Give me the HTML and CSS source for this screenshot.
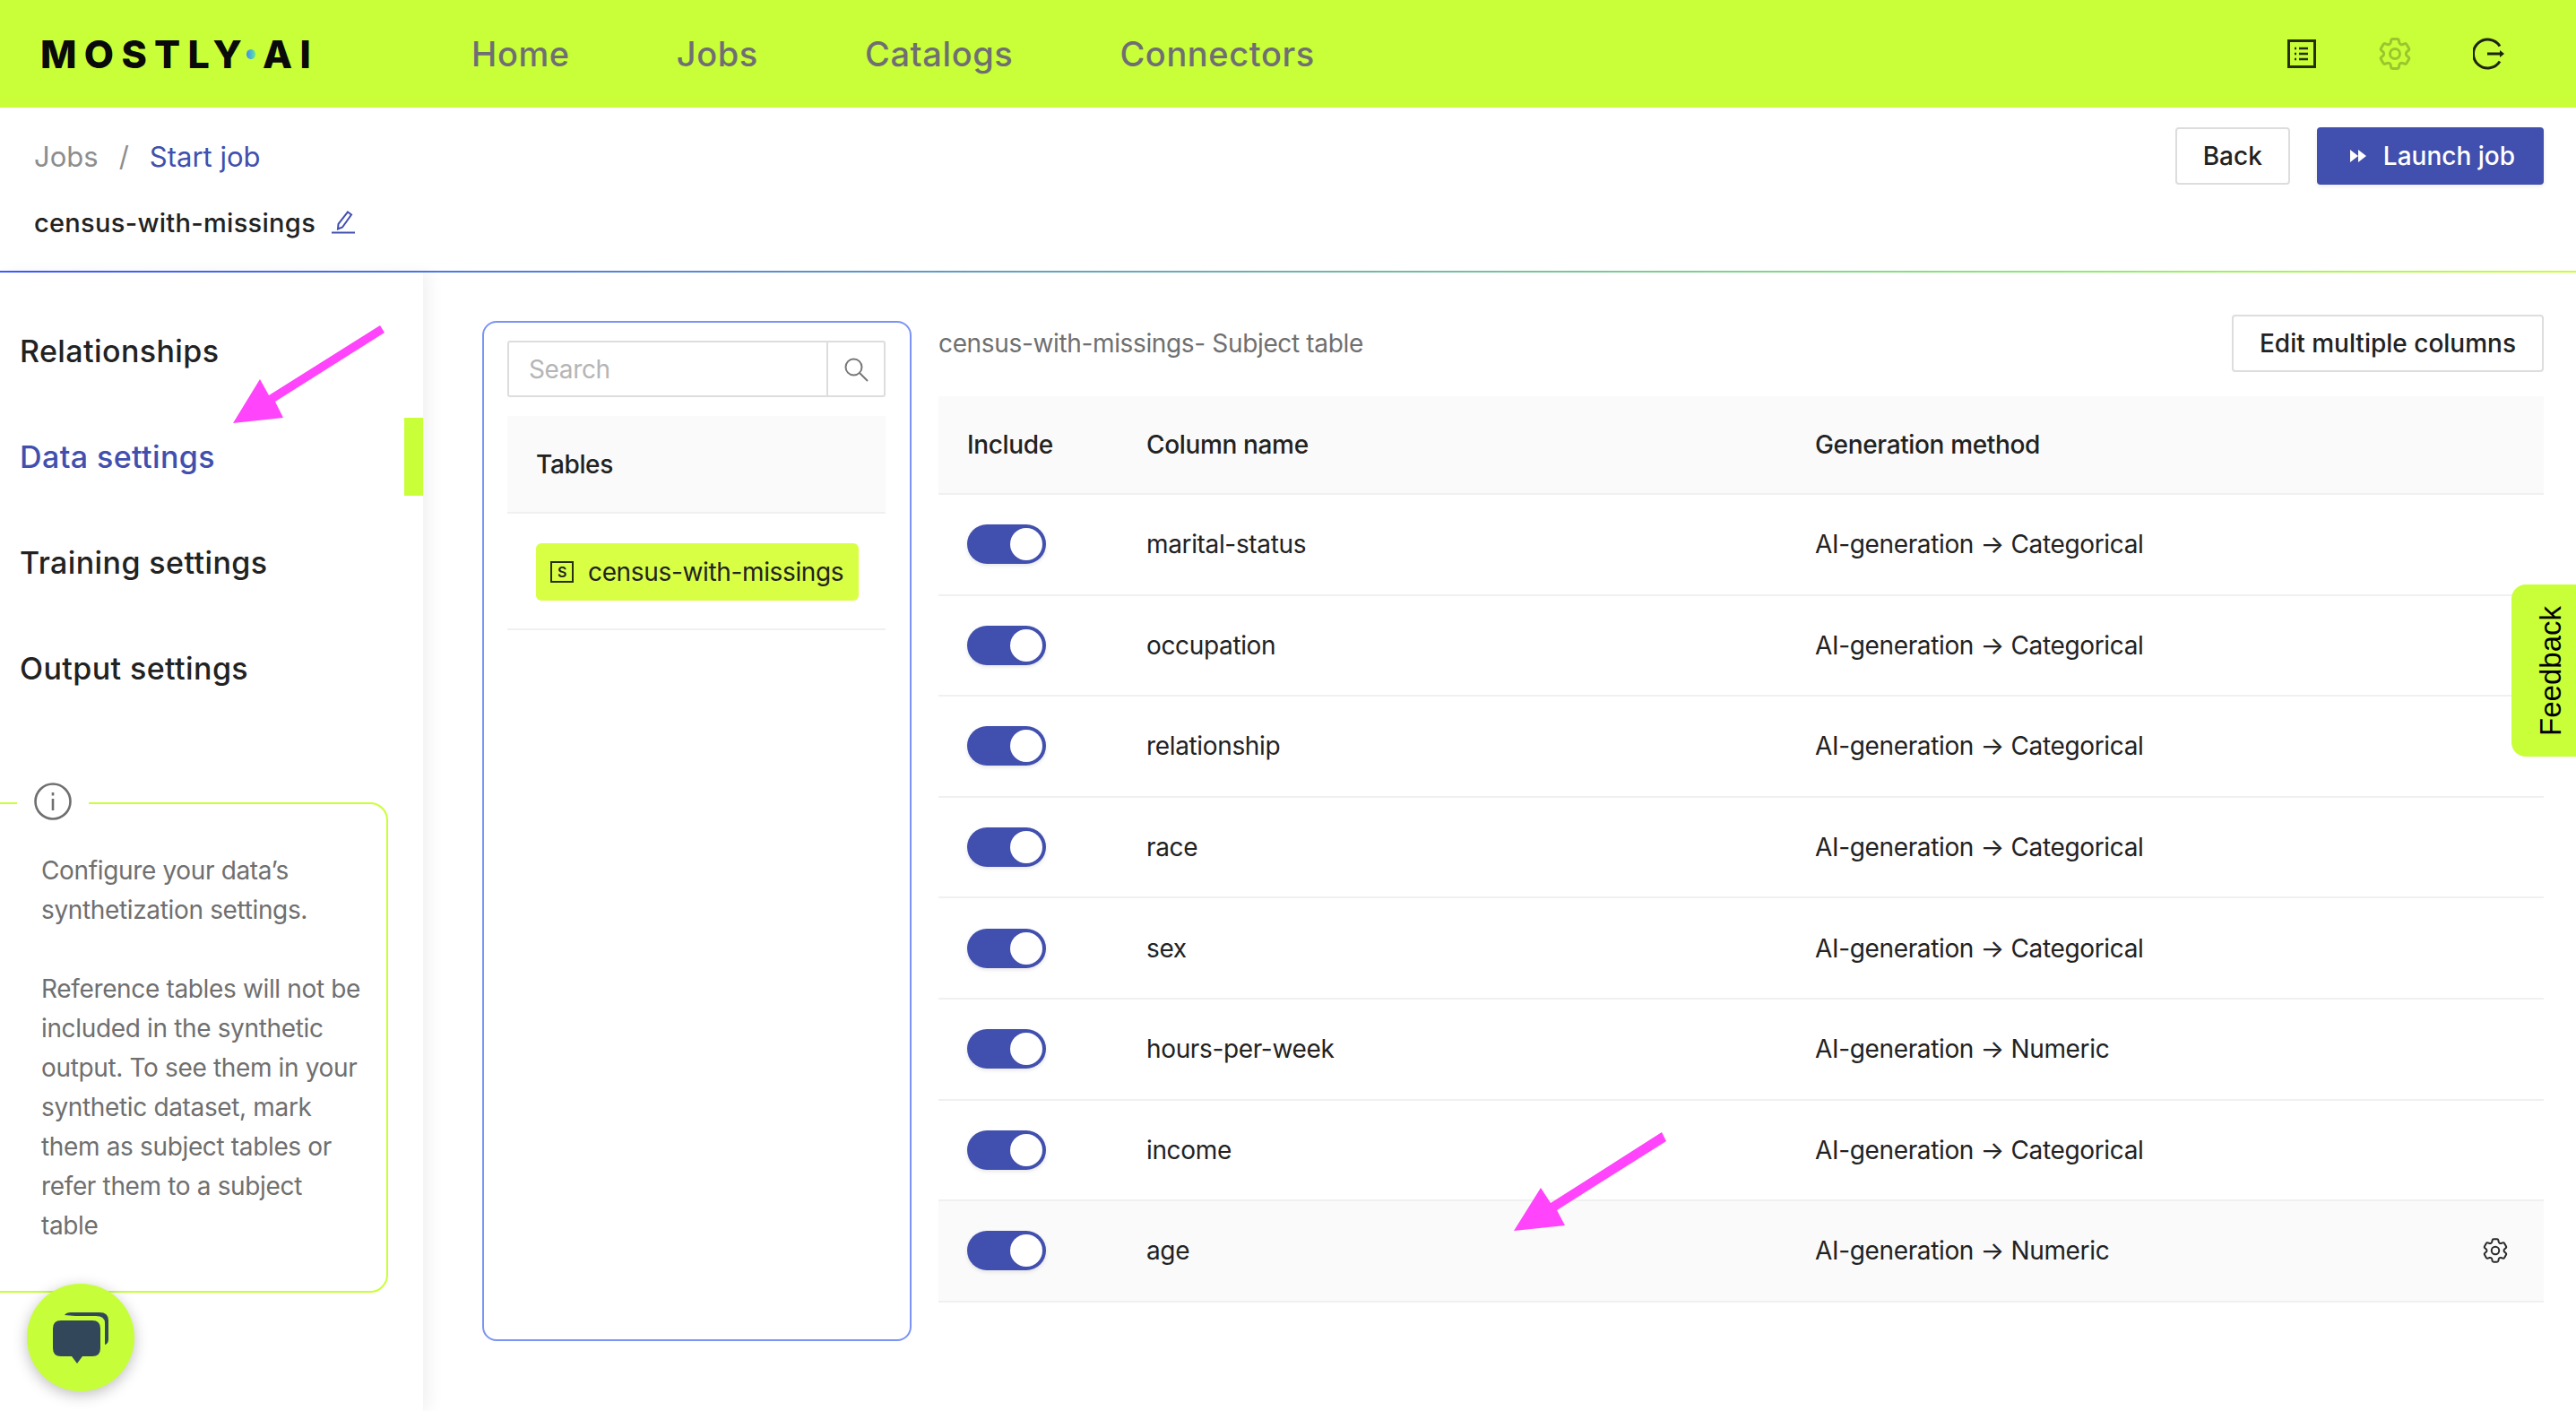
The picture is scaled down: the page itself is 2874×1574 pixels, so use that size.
FILE: index.html
```html
<!DOCTYPE html>
<html lang="en">
<head>
  <meta charset="UTF-8">
  <title>Start job</title>
  <link rel="stylesheet" href="styles.css">
</head>
<body>
  <header class="topbar">
    <div class="logo">MOSTLY<span class="logo-dot"></span>AI</div>
    <nav class="mainnav">
      <a>Home</a>
      <a>Jobs</a>
      <a>Catalogs</a>
      <a>Connectors</a>
    </nav>
    <div class="topicons">
      <svg class="icon-list" viewBox="0 0 32 32" fill="none" stroke="#26300f">
        <rect x="1.5" y="1.5" width="29" height="29" stroke-width="3"/>
        <path d="M13 10h10M13 16h10M13 22h10" stroke-width="2.6"/>
        <path d="M8 10h2M8 16h2M8 22h2" stroke-width="2.6" stroke-dasharray="2 0"/>
      </svg>
      <svg class="icon-gear" viewBox="0 0 24 24" fill="none" stroke="#9bc52f" stroke-width="1.6">
        <path d="M9.594 3.94c.09-.542.56-.94 1.11-.94h2.593c.55 0 1.02.398 1.11.94l.213 1.281c.063.374.313.686.645.87.074.04.147.083.22.127.324.196.72.257 1.075.124l1.217-.456a1.125 1.125 0 011.37.49l1.296 2.247a1.125 1.125 0 01-.26 1.431l-1.003.827c-.293.24-.438.613-.431.992a6.759 6.759 0 010 .255c-.007.378.138.75.43.99l1.005.828c.424.35.534.954.26 1.43l-1.298 2.247a1.125 1.125 0 01-1.369.491l-1.217-.456c-.355-.133-.75-.072-1.076.124a6.57 6.57 0 01-.22.128c-.331.183-.581.495-.644.869l-.213 1.28c-.09.543-.56.941-1.11.941h-2.594c-.55 0-1.02-.398-1.11-.94l-.213-1.281c-.062-.374-.312-.686-.644-.87a6.52 6.52 0 01-.22-.127c-.325-.196-.72-.257-1.076-.124l-1.217.456a1.125 1.125 0 01-1.369-.49l-1.297-2.247a1.125 1.125 0 01.26-1.431l1.004-.827c.292-.24.437-.613.43-.992a6.932 6.932 0 010-.255c.007-.378-.138-.75-.43-.99l-1.004-.828a1.125 1.125 0 01-.26-1.43l1.297-2.247a1.125 1.125 0 011.37-.491l1.216.456c.356.133.751.072 1.076-.124.072-.044.146-.087.22-.128.332-.183.582-.495.644-.869l.214-1.281z"/>
        <circle cx="12" cy="12" r="3"/>
      </svg>
      <svg class="icon-exit" viewBox="0 0 36 36" fill="none" stroke="#1c2410" stroke-width="3">
        <path d="M30 9.5A16 16 0 1 0 30 26.5"/>
        <path d="M16 18h17"/>
        <path d="M30 14l5 4-5 4z" fill="#1c2410" stroke="none"/>
      </svg>
    </div>
  </header>

  <section class="subbar">
    <div class="subbar-left">
      <div class="breadcrumb">
        <span class="crumb-muted">Jobs</span>
        <span class="crumb-sep">/</span>
        <span class="crumb-current">Start job</span>
      </div>
      <div class="jobname">
        census-with-missings
        <svg class="icon-pencil" viewBox="0 0 26 26" fill="none" stroke="#414fae" stroke-width="2">
          <path d="M18 1.500l4 3-10 14-5 2 .5-5.500z"/>
          <path d="M0 24.500h26"/>
        </svg>
      </div>
    </div>
    <div class="subbar-actions">
      <button class="btn">Back</button>
      <button class="btn btn-primary">
        <svg class="icon-ff" viewBox="0 0 18 14" fill="#fff"><path d="M0 0l9 7-9 7zM9 0l9 7-9 7z"/></svg>
        Launch job
      </button>
    </div>
  </section>

  <main class="layout">
    <aside class="sidebar">
      <nav class="sidenav">
        <a class="sidenav-item">Relationships</a>
        <a class="sidenav-item active">Data settings</a>
        <a class="sidenav-item">Training settings</a>
        <a class="sidenav-item">Output settings</a>
      </nav>
      <div class="infobox">
        <span class="infobox-icon">
          <svg viewBox="0 0 42 42" fill="none" stroke="#6f6f6f" stroke-width="2.600">
            <circle cx="21" cy="21" r="19.500"/>
            <path d="M21 18v13"/>
            <path d="M21 11v3.500"/>
          </svg>
        </span>
        <p>Configure your data’s synthetization settings.</p>
        <p>Reference tables will not be included in the synthetic output. To see them in your synthetic dataset, mark them as subject tables or refer them to a subject table</p>
      </div>
    </aside>

    <div class="content">
      <section class="tables-panel">
        <div class="searchbox">
          <span class="searchbox-input">Search</span>
          <span class="searchbox-btn">
            <svg viewBox="0 0 28 28" fill="none" stroke="#777" stroke-width="2">
              <circle cx="11.500" cy="11.500" r="9"/>
              <path d="M18 18l9 9"/>
            </svg>
          </span>
        </div>
        <div class="tables-head">Tables</div>
        <div class="tables-row">
          <div class="chip">
            <span class="chip-badge">S</span>
            census-with-missings
          </div>
        </div>
      </section>

      <section class="columns">
        <div class="columns-head">
          <span class="columns-title">census-with-missings- Subject table</span>
          <button class="btn">Edit multiple columns</button>
        </div>
        <div class="table">
          <div class="row row-head">
            <span>Include</span>
            <span>Column name</span>
            <span>Generation method</span>
          </div>
          <div class="row"><span class="toggle"></span><span>marital-status</span><span>AI-generation → Categorical</span></div>
          <div class="row"><span class="toggle"></span><span>occupation</span><span>AI-generation → Categorical</span></div>
          <div class="row"><span class="toggle"></span><span>relationship</span><span>AI-generation → Categorical</span></div>
          <div class="row"><span class="toggle"></span><span>race</span><span>AI-generation → Categorical</span></div>
          <div class="row"><span class="toggle"></span><span>sex</span><span>AI-generation → Categorical</span></div>
          <div class="row"><span class="toggle"></span><span>hours-per-week</span><span>AI-generation → Numeric</span></div>
          <div class="row"><span class="toggle"></span><span>income</span><span>AI-generation → Categorical</span></div>
          <div class="row row-hover">
            <span class="toggle"></span><span>age</span><span>AI-generation → Numeric</span>
            <svg class="icon-rowgear" viewBox="0 0 24 24" fill="none" stroke="#2a2a2a" stroke-width="1.400">
              <path d="M9.594 3.94c.09-.542.56-.94 1.11-.94h2.593c.55 0 1.02.398 1.11.94l.213 1.281c.063.374.313.686.645.87.074.04.147.083.22.127.324.196.72.257 1.075.124l1.217-.456a1.125 1.125 0 011.37.49l1.296 2.247a1.125 1.125 0 01-.26 1.431l-1.003.827c-.293.24-.438.613-.431.992a6.759 6.759 0 010 .255c-.007.378.138.75.43.99l1.005.828c.424.35.534.954.26 1.43l-1.298 2.247a1.125 1.125 0 01-1.369.491l-1.217-.456c-.355-.133-.75-.072-1.076.124a6.57 6.57 0 01-.22.128c-.331.183-.581.495-.644.869l-.213 1.28c-.09.543-.56.941-1.11.941h-2.594c-.55 0-1.02-.398-1.11-.94l-.213-1.281c-.062-.374-.312-.686-.644-.87a6.52 6.52 0 01-.22-.127c-.325-.196-.72-.257-1.076-.124l-1.217.456a1.125 1.125 0 01-1.369-.49l-1.297-2.247a1.125 1.125 0 01.26-1.431l1.004-.827c.292-.24.437-.613.43-.992a6.932 6.932 0 010-.255c.007-.378-.138-.75-.43-.99l-1.004-.828a1.125 1.125 0 01-.26-1.43l1.297-2.247a1.125 1.125 0 011.37-.491l1.216.456c.356.133.751.072 1.076-.124.072-.044.146-.087.22-.128.332-.183.582-.495.644-.869l.214-1.281z"/>
              <circle cx="12" cy="12" r="3"/>
            </svg>
          </div>
        </div>
      </section>
    </div>
  </main>

  <div class="feedback"><span>Feedback</span></div>

  <div class="chat">
    <svg viewBox="0 0 62 57" fill="#33475b">
      <path d="M13 3Q15 0 20 0H52Q62 0 62 9V30Q62 35 58 36V12Q58 4 48 4H25Z"/>
      <path d="M9 9H44Q53 9 53 18V40Q53 49 44 49H33L27 57 21 49H9Q0 49 0 40V18Q0 9 9 9Z"/>
    </svg>
  </div>

  <svg class="annotations" viewBox="0 0 2874 1574" fill="#ff44fb">
    <polygon points="424,363 429,371 307,448 316,466 260,472 290,423 300,441"/>
    <polygon points="1854,1263 1859,1273 1737,1350 1746,1367 1689,1373 1719,1325 1730,1342"/>
  </svg>
</body>
</html>
```

FILE: styles.css
```css
* {
  box-sizing: border-box;
}

html, body {
  margin: 0;
  height: 100%;
}

body {
  position: relative;
  width: 2874px;
  height: 1574px;
  overflow: hidden;
  background: #fff;
  color: #222;
  font-family: Inter, "Liberation Sans", sans-serif;
  font-size: 28px;
  letter-spacing: -0.35px;
}

.topbar {
  display: flex;
  align-items: center;
  height: 120px;
  padding: 0 79px 0 45px;
  background: #c9ff38;
}

.logo {
  display: flex;
  align-items: center;
  flex: none;
  width: 303px;
  color: #0a0a0a;
  font-size: 43px;
  font-weight: 800;
  letter-spacing: 8.3px;
}

.logo-dot {
  flex: none;
  width: 10px;
  height: 11px;
  margin: 0 8px 0 -3px;
  border-radius: 50%;
  background: linear-gradient(90deg, #3d8bf0, #63e6a0);
}

.mainnav {
  display: flex;
  gap: 119px;
  margin-left: 178px;
  color: #6f6f73;
  font-size: 38px;
  font-weight: 500;
  letter-spacing: 0.6px;
}

.topicons {
  display: flex;
  align-items: center;
  margin-left: auto;
}

.icon-list {
  width: 32px;
  height: 32px;
}

.icon-gear {
  width: 44px;
  height: 44px;
  margin-left: 66px;
}

.icon-exit {
  width: 36px;
  height: 36px;
  margin-left: 65px;
}

.subbar {
  display: flex;
  justify-content: space-between;
  height: 184px;
  padding: 22px 36px 0 38px;
  border-bottom: 2px solid;
  border-image: linear-gradient(90deg, #3d5afe, #8ee87a 80%, #c9ff38) 1;
}

.breadcrumb {
  display: flex;
  align-items: center;
  gap: 23px;
  height: 64px;
  font-size: 31px;
  letter-spacing: 0;
}

.crumb-muted,
.crumb-sep {
  color: #8d8d8d;
}

.crumb-current {
  color: #414fae;
}

.jobname {
  display: flex;
  align-items: center;
  gap: 18px;
  margin-top: 22px;
  height: 40px;
  font-size: 29px;
  font-weight: 500;
  letter-spacing: 0.3px;
}

.icon-pencil {
  width: 26px;
  height: 26px;
}

.subbar-actions {
  display: flex;
  gap: 30px;
}

.btn {
  display: flex;
  align-items: center;
  justify-content: center;
  height: 64px;
  padding: 0 29px;
  border: 2px solid #ddd;
  border-radius: 4px;
  background: #fff;
  color: #222;
  font-family: inherit;
  font-size: 28px;
  font-weight: 500;
}

.btn-primary {
  gap: 19px;
  padding: 0 32px 0 37px;
  border: none;
  background: #414fae;
  color: #fff;
  box-shadow: 0 2px 4px rgba(0, 0, 0, 0.08);
}

.icon-ff {
  width: 18px;
  height: 14px;
}

.layout {
  display: flex;
  height: 1270px;
}

.sidebar {
  flex: none;
  width: 472px;
  padding-top: 44px;
  background: #fff;
  box-shadow: 8px 0 16px rgba(0, 0, 0, 0.05);
}

.sidenav {
  display: flex;
  flex-direction: column;
  gap: 31px;
}

.sidenav-item {
  display: flex;
  align-items: center;
  height: 87px;
  padding-left: 22px;
  font-size: 34px;
  font-weight: 500;
  letter-spacing: 0.4px;
}

.sidenav-item.active {
  border-right: 21px solid #c9ff38;
  color: #414fae;
}

.infobox {
  position: relative;
  width: 437px;
  height: 547px;
  margin: 106px 0 0 -4px;
  padding: 52px 26px 0 48px;
  border: 2px solid #c9ff38;
  border-radius: 0 20px 20px 0;
  color: #6f6f6f;
  font-size: 28px;
  line-height: 44px;
}

.infobox p {
  margin: 0 0 44px;
}

.infobox-icon {
  position: absolute;
  top: -24px;
  left: 21px;
  display: flex;
  justify-content: center;
  width: 80px;
  background: #fff;
}

.infobox-icon svg {
  width: 42px;
  height: 42px;
}

.content {
  display: flex;
  flex: 1;
  gap: 30px;
  padding: 54px 36px 0 66px;
}

.tables-panel {
  flex: none;
  width: 479px;
  height: 1138px;
  padding: 20px 27px 0 26px;
  border: 2px solid #7b93f5;
  border-radius: 16px;
}

.searchbox {
  display: flex;
  height: 63px;
  border: 2px solid #ddd;
  border-radius: 3px;
}

.searchbox-input {
  flex: 1;
  padding: 13px 22px;
  border-right: 2px solid #ddd;
  color: #b5b5b5;
  line-height: 34px;
}

.searchbox-btn {
  display: flex;
  align-items: center;
  justify-content: center;
  width: 62px;
}

.searchbox-btn svg {
  width: 28px;
  height: 28px;
}

.tables-head {
  display: flex;
  align-items: center;
  height: 109px;
  margin-top: 21px;
  padding-left: 32px;
  border-bottom: 2px solid #f0f0f0;
  background: #fafafa;
  font-weight: 500;
}

.tables-row {
  height: 130px;
  padding: 33px 0 0 32px;
  border-bottom: 2px solid #f0f0f0;
}

.chip {
  display: flex;
  align-items: center;
  gap: 16px;
  width: 360px;
  height: 64px;
  padding-left: 16px;
  border-radius: 6px;
  background: #d9ff45;
  white-space: nowrap;
}

.chip-badge {
  display: flex;
  align-items: center;
  justify-content: center;
  width: 26px;
  height: 24px;
  border: 2px solid #26300f;
  font-size: 16px;
  font-weight: 600;
}

.columns {
  flex: 1;
}

.columns-head {
  display: flex;
  align-items: center;
  justify-content: space-between;
  height: 66px;
  margin: -8px 0 26px;
}

.columns-title {
  color: #6f6f6f;
}

.row {
  display: grid;
  grid-template-columns: 200px 746px 1fr auto;
  align-items: center;
  height: 112.6px;
  padding: 0 32px;
  border-bottom: 2px solid #f0f0f0;
}

.row-head {
  height: 110px;
  background: #fafafa;
  font-weight: 500;
}

.row-hover {
  background: #fafafa;
}

.toggle {
  position: relative;
  display: block;
  width: 88px;
  height: 44px;
  border-radius: 22px;
  background: #414fae;
  box-shadow: 0 2px 4px rgba(0, 0, 0, 0.1);
}

.toggle::after {
  content: "";
  position: absolute;
  top: 4px;
  right: 4px;
  width: 36px;
  height: 36px;
  border-radius: 50%;
  background: #fff;
}

.icon-rowgear {
  width: 34px;
  height: 34px;
  margin-right: 5px;
}

.feedback {
  position: absolute;
  top: 652px;
  right: 0;
  display: flex;
  align-items: center;
  justify-content: center;
  width: 72px;
  height: 192px;
  border-radius: 16px 0 0 16px;
  background: #c9ff38;
  color: #000;
  font-family: "Liberation Sans", sans-serif;
  font-size: 33px;
  letter-spacing: 0;
}

.feedback span {
  margin-left: 16px;
  writing-mode: vertical-rl;
  transform: rotate(180deg);
}

.chat {
  position: absolute;
  top: 1432px;
  left: 30px;
  display: flex;
  align-items: center;
  justify-content: center;
  width: 120px;
  height: 120px;
  border-radius: 50%;
  background: #c6ff3a;
  box-shadow: 0 4px 16px rgba(0, 0, 0, 0.25);
}

.chat svg {
  width: 62px;
  height: 57px;
}

.annotations {
  position: absolute;
  top: 0;
  left: 0;
  width: 2874px;
  height: 1574px;
  pointer-events: none;
}
```
